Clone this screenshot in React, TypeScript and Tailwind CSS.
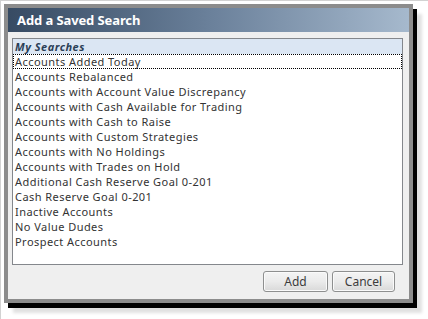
import React from 'react'

const searches: string[] = [
  'Accounts Added Today',
  'Accounts Rebalanced',
  'Accounts with Account Value Discrepancy',
  'Accounts with Cash Available for Trading',
  'Accounts with Cash to Raise',
  'Accounts with Custom Strategies',
  'Accounts with No Holdings',
  'Accounts with Trades on Hold',
  'Additional Cash Reserve Goal 0-201',
  'Cash Reserve Goal 0-201',
  'Inactive Accounts',
  'No Value Dudes',
  'Prospect Accounts'
]

const DialogButton = ({ label, width }: { label: string; width: string }) => {
  return (
    <button
      className={`${width} h-[21px] rounded-[3px] border border-[#8e8f8f] bg-gradient-to-b from-[#f4f4f4] via-[#ebebeb] to-[#d9d9d9] text-[12px] leading-[19px] text-[#3c3c3c] shadow-[inset_0_0_0_1px_#fafafa]`}
    >
      {label}
    </button>
  )
}

const App = () => {
  return (
    <div className="w-[428px] h-[319px] bg-white border-t border-l border-[#d2d2d2] pt-[3px] pl-[3px] font-['Noto_Sans',sans-serif]">
      <div className="w-[409px] h-[299px] border-4 border-[#8c8c8c] flex flex-col shadow-[4px_5px_0_#000,9px_10px_3px_rgba(0,0,0,0.12)]">
        {/* Title bar */}
        <div className="h-[24px] shrink-0 flex items-center pl-[9px] bg-gradient-to-r from-[#374b63] via-[#6a809a] to-[#a6b9cd]">
          <h1 className="text-[13px] leading-[18px] font-bold text-white tracking-[-0.1px]">Add a Saved Search</h1>
        </div>

        {/* Body */}
        <div className="flex-1 bg-[#efefef] pt-[6px] pl-[4px] flex flex-col">
          <div className="w-[391px] h-[227px] border border-[#84878c] bg-white">
            <div className="h-[15px] bg-[#dbe6f3] px-[2px] text-[11px] leading-[15px] tracking-[0.5px] font-bold italic text-[#2b3f57]">
              My Searches
            </div>
            <ul className="text-[11px] leading-[15px] tracking-[0.45px] text-[#333]">
              {searches.map((name, i) => (
                <li
                  key={name}
                  className={`h-[15px] px-[2px] ${i === 0 ? 'outline outline-dotted outline-black -outline-offset-1' : ''}`}
                >
                  {name}
                </li>
              ))}
            </ul>
          </div>

          <div className="mt-[6px] flex justify-end gap-[4px] pr-[14px]">
            <DialogButton label="Add" width="w-[65px]" />
            <DialogButton label="Cancel" width="w-[63px]" />
          </div>
        </div>
      </div>
    </div>
  )
}

export default App
